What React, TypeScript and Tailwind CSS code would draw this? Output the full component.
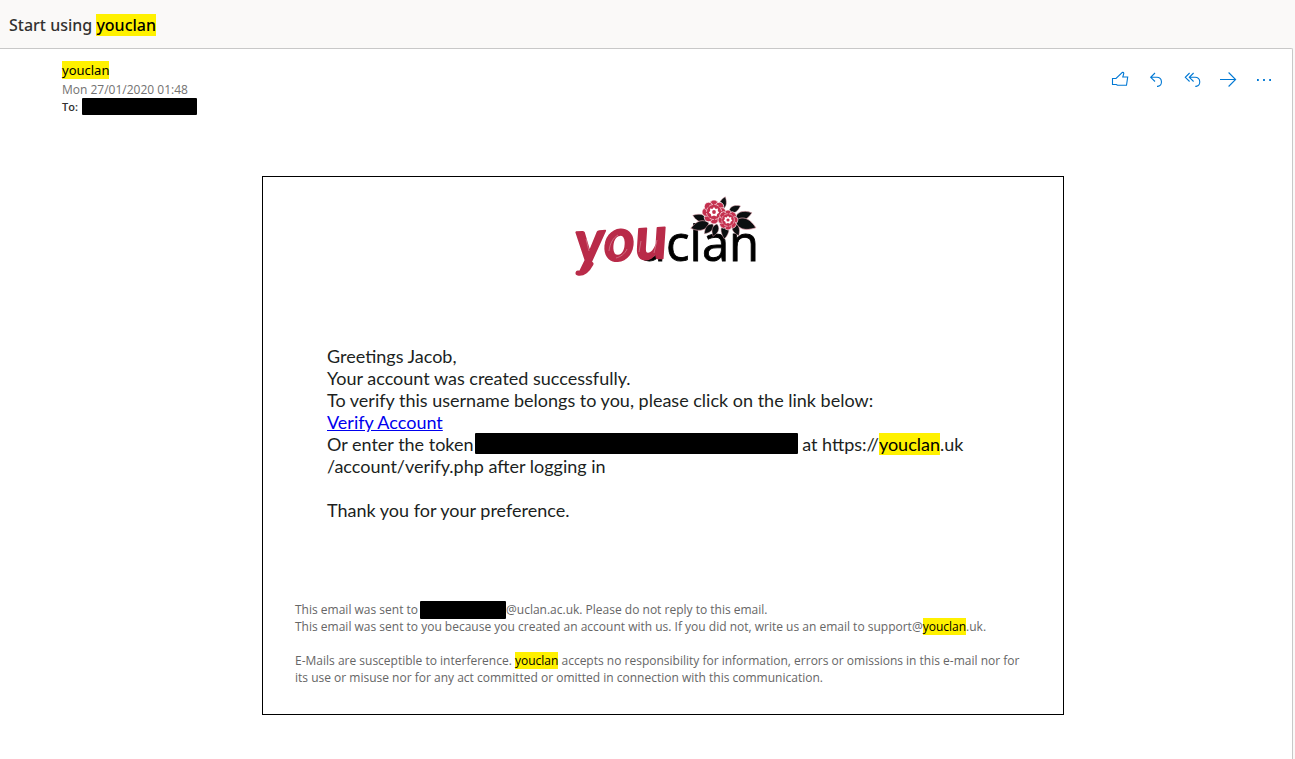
import type { ReactNode } from "react";

function Mark({ children }: { children: ReactNode }) {
  return <mark className="bg-[#fff100] text-black">{children}</mark>;
}

function ActionButton({ label, children }: { label: string; children: ReactNode }) {
  return (
    <button type="button" aria-label={label} className="flex h-8 w-9 items-center justify-center text-[#0078d4]">
      <svg
        width="18"
        height="18"
        viewBox="0 0 18 18"
        fill="none"
        stroke="currentColor"
        strokeWidth="1.1"
        aria-hidden="true"
      >
        {children}
      </svg>
    </button>
  );
}

function Flower({ x, y, r }: { x: number; y: number; r: number }) {
  const petals = [0, 45, 90, 135, 180, 225, 270, 315];
  return (
    <g transform={`translate(${x} ${y}) scale(${r / 12})`}>
      {petals.map((a) => (
        <circle key={a} cx="0" cy="-7.6" r="4.4" fill="#c4314f" stroke="#fff" strokeWidth="0.7" transform={`rotate(${a})`} />
      ))}
      <circle r="8.6" fill="#c4314f" />
      <circle r="7.6" fill="none" stroke="#f3c3cd" strokeWidth="0.9" strokeDasharray="4.6 1.4" />
      <circle r="5.4" fill="#c4314f" />
      <path d="M0-5 1.6-3 4-3.6 3.8-1.2 5.2.8 3.2 2 2.6 4.4 0 3.6-2.6 4.4-3.2 2-5.2.8-3.8-1.2-4-3.6-1.6-3Z" fill="#fff" />
      <circle r="1.9" fill="#c4314f" />
    </g>
  );
}

function Leaf({ x, y, angle, length }: { x: number; y: number; angle: number; length: number }) {
  return (
    <path
      d="M0 0C3-5 9-6 16 0C9 5 4 5 0 0Z"
      fill="#0b0f10"
      stroke="#e9a9b5"
      strokeWidth="0.5"
      transform={`translate(${x} ${y}) rotate(${angle}) scale(${length / 16})`}
    />
  );
}

function Logo() {
  return (
    <svg width="184" height="84" viewBox="0 0 184 84" className="overflow-visible" role="img" aria-label="youclan">
      <text
        x="65"
        y="68"
        fontSize="49"
        fill="#000"
        stroke="#000"
        strokeWidth="0.8"
        fontFamily="'Open Sans', sans-serif"
      >
        uclan
      </text>
      <text
        x="5"
        y="70"
        fontSize="60"
        fontWeight="700"
        fontStyle="italic"
        fill="#b92b49"
        stroke="#b92b49"
        strokeWidth="1.6"
        strokeLinejoin="round"
        fontFamily="Lato, sans-serif"
        transform="rotate(-3 5 70)"
      >
        you
      </text>
      <path d="M7 80C12 81 17 77 20 71" fill="none" stroke="#b92b49" strokeWidth="5" strokeLinecap="round" />
      <g fill="none" stroke="#fff" strokeWidth="0.5" opacity="0.6">
        <path d="M15 46 18 58M31 53 22 69M34 50 29 59" />
        <path d="M38 58C39 50 42 45 47 42M56 56C54 61 49 64 45 65" />
        <path d="M70 48 68 59M86 47 83 60" />
      </g>
      <g transform="translate(4 -1)">
        <Leaf x={132} y={28} angle={198} length={15} />
        <Leaf x={134} y={31} angle={164} length={19} />
        <Leaf x={138} y={32} angle={132} length={13} />
        <Leaf x={142} y={32} angle={108} length={13} />
        <Leaf x={150} y={31} angle={92} length={16} />
        <Leaf x={146} y={18} angle={-72} length={14} />
        <Leaf x={154} y={20} angle={-28} length={13} />
        <Leaf x={160} y={27} angle={-20} length={18} />
        <Leaf x={160} y={29} angle={18} length={22} />
        <Leaf x={158} y={31} angle={66} length={14} />
        <Flower x={139} y={20} r={12} />
        <Flower x={153} y={28} r={10} />
      </g>
    </svg>
  );
}

export default function App() {
  return (
    <div className="flex min-h-screen flex-col bg-[#faf9f8] font-['Open_Sans',sans-serif] text-[#323130]">
      <header className="flex h-12 items-center px-[9px] pt-0.5">
        <h1 className="font-['Noto_Sans',sans-serif] text-base font-medium">
          Start using <Mark>youclan</Mark>
        </h1>
      </header>

      <main className="mr-[2px] flex-1 rounded-tr-[2px] border-t border-r border-[#c8c8c8] bg-white pr-[10px] pl-[62px]">
        <div className="flex items-start justify-between pt-[10px]">
          <div>
            <div className="font-['Noto_Sans',sans-serif] text-[13px] leading-[22px] text-[#323130]">
              <Mark>youclan</Mark>
            </div>
            <div className="text-[12px] leading-[17px] text-[#737271]">Mon 27/01/2020 01:48</div>
            <div className="flex items-center gap-1 text-[11px] leading-[17px] font-semibold">
              <span>To:</span>
              <span className="h-[17px] w-[115px] rounded-[1px] bg-black" />
            </div>
          </div>

          <div className="flex pt-1">
            <ActionButton label="Like">
              <path d="M1.5 8.5H5L10.8 3c.5-1 2-.8 2 .5L11.8 7h4.9l-1.2 8.3H6.5L5.3 14.5H1.5Z" />
            </ActionButton>
            <ActionButton label="Reply">
              <path d="M8 3 3.7 7.3 8 11.5M3.7 7.3h6.1a4.6 4.6 0 0 1 1 9.1H10" />
            </ActionButton>
            <ActionButton label="Reply all">
              <path d="M6.6 3 2.3 7.3 6.6 11.5M10.6 3 6.3 7.3 10.6 11.5M6.3 7.3h5.8a4.6 4.6 0 0 1 1 9.1h-.8" />
            </ActionButton>
            <ActionButton label="Forward">
              <path d="M1 9.5h15.6M9.6 2.5l7 7-7 7" />
            </ActionButton>
            <ActionButton label="More actions">
              <path d="M2 10h1.8M8.1 10h1.8M14.2 10H16" strokeWidth="1.8" />
            </ActionButton>
          </div>
        </div>

        <article className="mt-[61px] mr-[18px] flex flex-col items-center pb-11">
          <div className="w-full max-w-[802px] border border-black px-8 pt-4 pb-7">
            <div className="flex justify-center">
              <Logo />
            </div>

            <div className="mt-[68px] px-8 font-[Lato,sans-serif] text-[18px] leading-[22px] text-[#201f1e]">
              <p>Greetings Jacob,</p>
              <p>Your account was created successfully.</p>
              <p>To verify this username belongs to you, please click on the link below:</p>
              <p>
                <a href="#verify" className="text-[#0000ee] underline">
                  Verify Account
                </a>
              </p>
              <p>
                Or enter the token
                <span className="ml-px inline-block h-[21px] w-[323px] rounded-[1px] bg-black align-top" /> at https://
                <Mark>youclan</Mark>.uk
                <br />
                /account/verify.php after logging in
              </p>
              <p className="mt-[22px]">Thank you for your preference.</p>
            </div>

            <footer className="mt-[80px] text-[12px] leading-[17px] text-[#666666]">
              <p className="flex items-center">
                <span>This email was sent to</span>
                <span className="-my-px ml-[2px] h-[18px] w-[86px] rounded-[1px] bg-black" />
                <span>@uclan.ac.uk. Please do not reply to this email.</span>
              </p>
              <p>
                This email was sent to you because you created an account with us. If you did not, write us an email to
                support@<Mark>youclan</Mark>.uk.
              </p>
              <p className="mt-[17px]">
                E-Mails are susceptible to interference. <Mark>youclan</Mark> accepts no responsibility for information,
                errors or omissions in this e-mail nor for its use or misuse nor for any act committed or omitted in
                connection with this communication.
              </p>
            </footer>
          </div>
        </article>
      </main>
    </div>
  );
}
